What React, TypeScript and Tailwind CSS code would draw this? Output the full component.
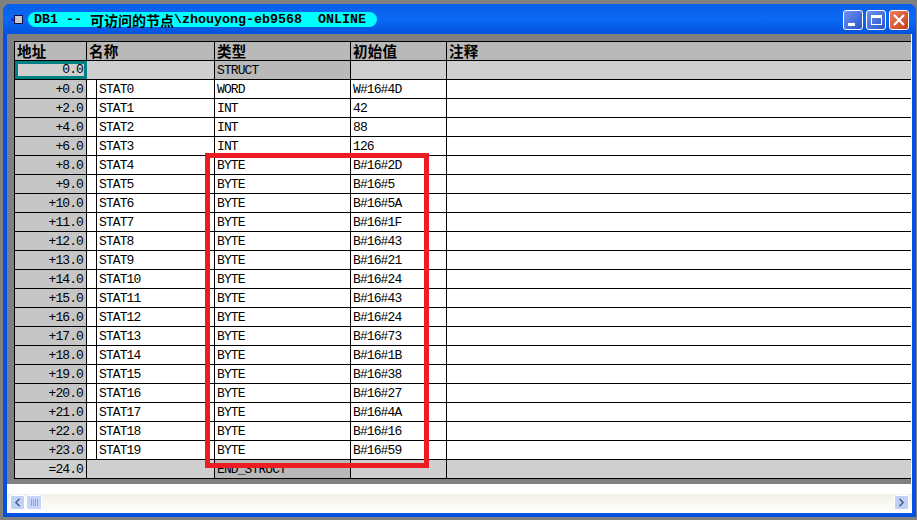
import { ChevronLeft, ChevronRight } from 'lucide-react';

const rows = [
  ['+0.0', 'STAT0', 'WORD', 'W#16#4D'],
  ['+2.0', 'STAT1', 'INT', '42'],
  ['+4.0', 'STAT2', 'INT', '88'],
  ['+6.0', 'STAT3', 'INT', '126'],
  ['+8.0', 'STAT4', 'BYTE', 'B#16#2D'],
  ['+9.0', 'STAT5', 'BYTE', 'B#16#5'],
  ['+10.0', 'STAT6', 'BYTE', 'B#16#5A'],
  ['+11.0', 'STAT7', 'BYTE', 'B#16#1F'],
  ['+12.0', 'STAT8', 'BYTE', 'B#16#43'],
  ['+13.0', 'STAT9', 'BYTE', 'B#16#21'],
  ['+14.0', 'STAT10', 'BYTE', 'B#16#24'],
  ['+15.0', 'STAT11', 'BYTE', 'B#16#43'],
  ['+16.0', 'STAT12', 'BYTE', 'B#16#24'],
  ['+17.0', 'STAT13', 'BYTE', 'B#16#73'],
  ['+18.0', 'STAT14', 'BYTE', 'B#16#1B'],
  ['+19.0', 'STAT15', 'BYTE', 'B#16#38'],
  ['+20.0', 'STAT16', 'BYTE', 'B#16#27'],
  ['+21.0', 'STAT17', 'BYTE', 'B#16#4A'],
  ['+22.0', 'STAT18', 'BYTE', 'B#16#16'],
  ['+23.0', 'STAT19', 'BYTE', 'B#16#59'],
];

const cols = 'grid grid-cols-[72px_128px_136px_96px_1fr] grid-rows-[18px] h-[19px] border-b border-black';
const cell = 'border-r border-black flex items-center pt-px';

function Header() {
  const labels = ['地址', '名称', '类型', '初始值'];
  return (
    <div className={`${cols} bg-[#b9b9b9] font-['Noto_Sans_CJK_SC',sans-serif] text-[14.5px] leading-[16px] font-bold tracking-[0.2px] text-black`}>
      {labels.map((l) => (
        <div key={l} className="border-r border-black flex items-center pl-[2px]">{l}</div>
      ))}
      <div className="flex items-center pl-[2px]">注释</div>
    </div>
  );
}

function StructRow({ addr, type, selected }: { addr: string; type: string; selected?: boolean }) {
  return (
    <div className={`${cols} bg-[#cfcfcf]`}>
      {selected ? (
        <div className="border-[3px] border-[#008080] flex items-center justify-end pr-px">{addr}</div>
      ) : (
        <div className={`${cell} justify-end pr-[3px]`}>{addr}</div>
      )}
      <div className={cell} />
      <div className={`${cell} pl-[2px] bg-[#b9b9b9]`}>{type}</div>
      <div className={cell} />
      <div />
    </div>
  );
}

function DataRow({ row }: { row: string[] }) {
  return (
    <div className={`${cols} bg-white`}>
      <div className={`${cell} justify-end pr-[3px] bg-[#c6c6c6]`}>{row[0]}</div>
      <div className="border-r border-black flex">
        <div className="w-[10px] shrink-0 border-r border-black" />
        <div className="flex items-center pl-[2px] pt-px">{row[1]}</div>
      </div>
      <div className={`${cell} pl-[2px]`}>{row[2]}</div>
      <div className={`${cell} pl-[2px]`}>{row[3]}</div>
      <div />
    </div>
  );
}

function WinButton({ children, red }: { children: React.ReactNode; red?: boolean }) {
  return (
    <div
      className={`w-[20px] h-[20px] rounded-[3px] border border-white flex items-center justify-center ${
        red
          ? 'bg-gradient-to-br from-[#e8805e] to-[#c73a15]'
          : 'bg-gradient-to-br from-[#6f92ee] to-[#2a52cf]'
      }`}
    >
      {children}
    </div>
  );
}

export default function App() {
  return (
    <div className="w-[917px] h-[520px] bg-[#808080] pt-[4px] pl-[3px] pr-px pb-[3px] overflow-hidden">
      <div className="relative h-full flex flex-col rounded-t-[7px] bg-[#0450df]">
        {/* Title bar */}
        <div className="h-[30px] shrink-0 flex items-center pt-px pl-[8px] pr-[7px] rounded-t-[7px] bg-gradient-to-b from-[#0a5fe8] via-[#0a6af5] to-[#0452dc]">
          <div className="flex items-center mr-[5px]">
            <div className="w-[3px] h-[3px] bg-[#2a2ad0]" />
            <div className="w-[9px] h-[9px] bg-[#c9c9c9] border border-[#10104a]" />
          </div>
          <div className="w-[349px] h-[15px] rounded-full bg-[#00ffff] pl-[6px] pt-px flex items-center whitespace-pre font-['Liberation_Mono',monospace] font-bold text-[13.33px] leading-[14px] text-black">
            DB1 -- <span className="font-['Noto_Sans_CJK_SC',sans-serif] text-[14px] leading-[14px]">可访问的节点</span>\zhouyong-eb9568  ONLINE
          </div>
          <div className="ml-auto flex gap-[3px]">
            <WinButton>
              <div className="w-[7px] h-[3px] bg-white mt-[9px] mr-[4px]" />
            </WinButton>
            <WinButton>
              <div className="w-[11px] h-[10px] border border-t-[3px] border-white" />
            </WinButton>
            <WinButton red>
              <svg width="12" height="12" viewBox="0 0 12 12" stroke="white" strokeWidth="2.2" fill="none">
                <path d="M1 1 L11 11 M11 1 L1 11" />
              </svg>
            </WinButton>
          </div>
        </div>

        {/* Client area */}
        <div className="flex-1 flex flex-col mx-[4px] mb-[4px] bg-white min-h-0">
          <div className="h-[450px] shrink-0 bg-[#808080] border-r border-white pl-[7px] pt-[7px]">
            <div className="border-t border-l border-black font-['Liberation_Mono',monospace] text-[13px] leading-[12px] tracking-[-0.9px] text-black">
              <Header />
              <StructRow addr="0.0" type="STRUCT" selected />
              {rows.map((r) => (
                <DataRow key={r[1]} row={r} />
              ))}
              <StructRow addr="=24.0" type="END_STRUCT" />
            </div>
          </div>

          {/* Horizontal scrollbar */}
          <div className="mt-[10px] h-[17px] flex items-center px-[3px] bg-gradient-to-b from-[#f3f1e8] to-[#fdfdfb]">
            <div className="w-[15px] h-[15px] rounded-[2px] border border-white bg-[#c0d0f6] flex items-center justify-center text-[#4d6185]">
              <ChevronLeft size={13} strokeWidth={3} />
            </div>
            <div className="ml-px w-[16px] h-[15px] rounded-[2px] border border-white bg-[#c6d5f8] flex items-center justify-center gap-px">
              <div className="w-px h-[7px] bg-[#8ea4d6]" />
              <div className="w-px h-[7px] bg-[#8ea4d6]" />
              <div className="w-px h-[7px] bg-[#8ea4d6]" />
              <div className="w-px h-[7px] bg-[#8ea4d6]" />
            </div>
            <div className="ml-auto w-[15px] h-[15px] rounded-[2px] border border-white bg-[#c0d0f6] flex items-center justify-center text-[#4d6185]">
              <ChevronRight size={13} strokeWidth={3} />
            </div>
          </div>
        </div>

        {/* Red annotation box */}
        <div className="absolute left-[202px] top-[149px] w-[224px] h-[315px] border-[5px] border-[#ed1c24]" />
      </div>
    </div>
  );
}
